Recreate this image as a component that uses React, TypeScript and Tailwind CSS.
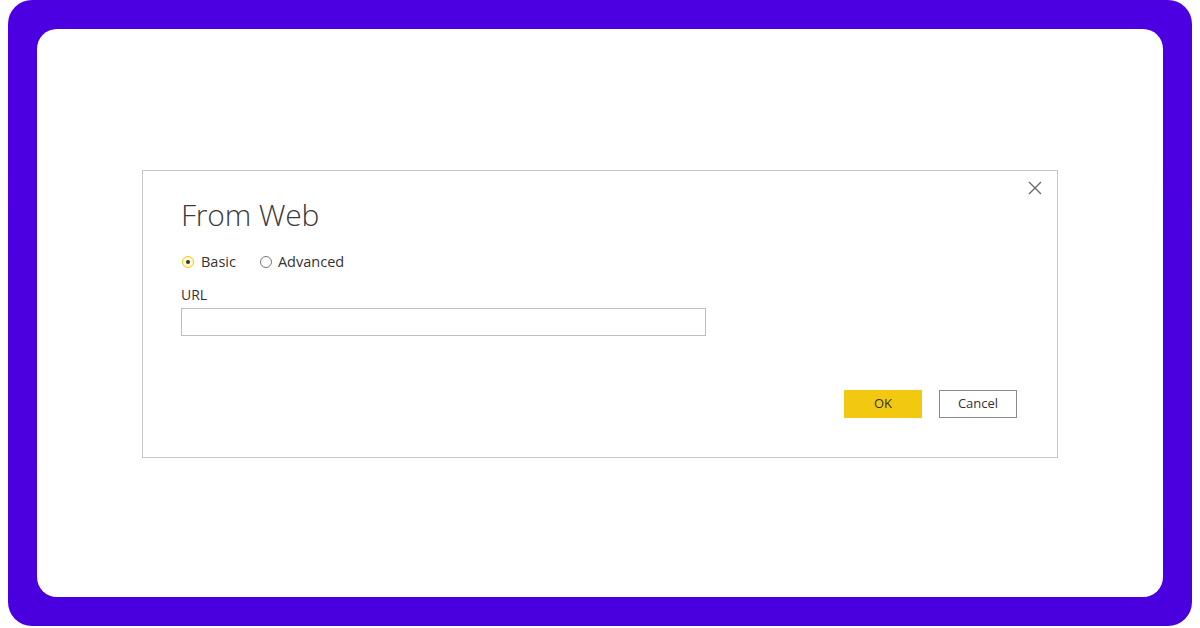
import React from "react";

export default function App() {
  return (
    <div className="w-[1200px] h-[628px] bg-white flex" style={{ fontFamily: '"Open Sans", "Noto Sans", sans-serif' }}>
      <div className="ml-[8px] w-[1184px] h-[626px] rounded-[24px] bg-gradient-to-b from-[#4c00e2] to-[#4a00de] p-[29px] pt-[29px] flex">
        <div className="flex-1 bg-white rounded-[20px] pt-[141px] pl-[105px]">
          <div className="relative w-[916px] h-[288px] border border-[#c6c6c6] bg-white pl-[38px] pt-[26px]">
            <button className="absolute right-[14px] top-[9px] w-[16px] h-[16px] text-[#666]">
              <svg viewBox="0 0 16 16" width="16" height="16" fill="none" stroke="#6b6b6b" strokeWidth="1.4">
                <path d="M2 2 L14 14 M14 2 L2 14" />
              </svg>
            </button>
            <div className="text-[30px] font-light text-[#3b3b3b] leading-[36px] tracking-[-0.2px]">From Web</div>
            <div className="flex items-center mt-[19px] text-[14.5px] text-[#333] leading-[20px]">
              <div className="flex items-center">
                <span className="w-[12px] h-[12px] rounded-full border border-[#f2c811] bg-[#fff8d6] flex items-center justify-center mr-[7px] ml-[1px]">
                  <span className="w-[4px] h-[4px] rounded-full bg-[#333]" />
                </span>
                <span>Basic</span>
              </div>
              <div className="flex items-center ml-[24px]">
                <span className="w-[12px] h-[12px] rounded-full border-[1.5px] border-[#777] mr-[6px]" />
                <span>Advanced</span>
              </div>
            </div>
            <div className="mt-[14px] text-[14px] text-[#333] leading-[18px]">URL</div>
            <div className="mt-[4px] w-[525px] h-[28px] border border-[#bdbdbd] bg-white" />
            <div className="flex justify-end mt-[54px] pr-[40px] gap-[17px]">
              <button className="w-[78px] h-[28px] bg-[#f2c811] text-[13px] text-[#333]">OK</button>
              <button className="w-[78px] h-[28px] border border-[#8a8a8a] bg-white text-[13px] text-[#333]">Cancel</button>
            </div>
          </div>
        </div>
      </div>
    </div>
  );
}
